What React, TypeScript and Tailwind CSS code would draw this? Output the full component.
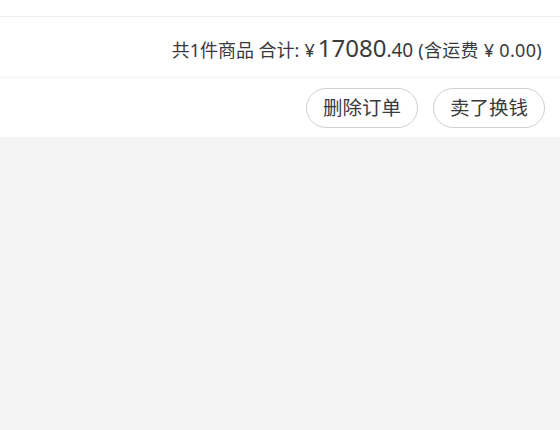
export default function App() {
  const font = { fontFamily: '"Noto Sans", "Noto Sans CJK SC", sans-serif' };
  return (
    <div className="w-[560px] h-[430px] bg-[#f4f4f4] flex flex-col" style={font}>
      <div className="bg-white">
        <div className="h-[17px] border-b border-[#efefef]" />
        <div className="h-[61px] flex items-center justify-end pr-[18px] pt-[1px] text-[#3a3a3a] border-b border-[#f2f2f2]">
          <div className="flex items-baseline">
            <span className="text-[18px]">共1件商品 合计:</span>
            <span className="text-[18px] ml-[5px]">¥</span>
            <span className="text-[24px] ml-[3px]">17080</span>
            <span className="text-[19px]">.40</span>
            <span className="text-[18px] ml-[5px] tracking-[0.3px]">(含运费 ¥ 0.00)</span>
          </div>
        </div>
        <div className="h-[59px] flex items-center justify-end gap-[15px] pr-[15px] pt-[1px]">
          <button className="w-[112px] h-[40px] rounded-full border border-[#cfcfcf] text-[19.5px] text-[#3a3a3a]">删除订单</button>
          <button className="w-[112px] h-[40px] rounded-full border border-[#cfcfcf] text-[19.5px] text-[#3a3a3a]">卖了换钱</button>
        </div>
      </div>
    </div>
  );
}
